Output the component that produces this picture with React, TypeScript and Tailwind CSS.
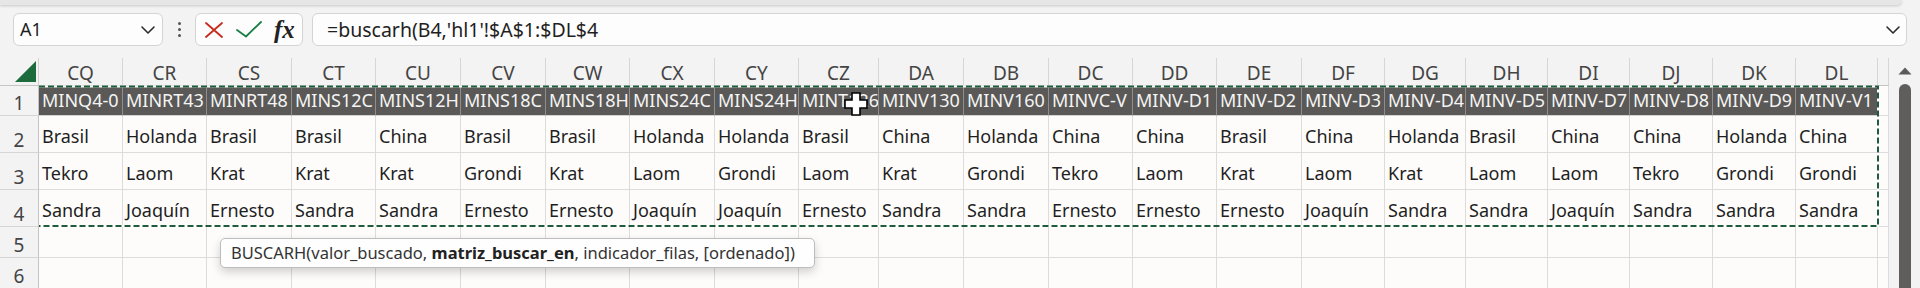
import React from "react";

const cols = ["CQ","CR","CS","CT","CU","CV","CW","CX","CY","CZ","DA","DB","DC","DD","DE","DF","DG","DH","DI","DJ","DK","DL"];
const r1 = ["MINQ4-0","MINRT43","MINRT48","MINS12C","MINS12H","MINS18C","MINS18H","MINS24C","MINS24H","MINT126","MINV130","MINV160","MINVC-V","MINV-D1","MINV-D2","MINV-D3","MINV-D4","MINV-D5","MINV-D7","MINV-D8","MINV-D9","MINV-V1"];
const r2 = ["Brasil","Holanda","Brasil","Brasil","China","Brasil","Brasil","Holanda","Holanda","Brasil","China","Holanda","China","China","Brasil","China","Holanda","Brasil","China","China","Holanda","China"];
const r3 = ["Tekro","Laom","Krat","Krat","Krat","Grondi","Krat","Laom","Grondi","Laom","Krat","Grondi","Tekro","Laom","Krat","Laom","Krat","Laom","Laom","Tekro","Grondi","Grondi"];
const r4 = ["Sandra","Joaquín","Ernesto","Sandra","Sandra","Ernesto","Ernesto","Joaquín","Joaquín","Ernesto","Sandra","Sandra","Ernesto","Ernesto","Ernesto","Joaquín","Sandra","Sandra","Joaquín","Sandra","Sandra","Sandra"];

function Chevron() {
  return (
    <svg width="24" height="24" viewBox="0 0 24 24" fill="none" stroke="#2b2b2b" strokeWidth="1.6" strokeLinecap="round" strokeLinejoin="round">
      <path d="m6 9 6 6 6-6" />
    </svg>
  );
}

function RowNum({ n }: { n: number }) {
  return (
    <div className="flex items-end justify-center border-r border-b border-r-[#c4c4c4] border-b-[#d6d6d6] bg-[#f3f3f3] pb-[1px] text-[19px] leading-[22px] text-[#444]">
      {n}
    </div>
  );
}

function DataCell({ text }: { text?: string }) {
  return (
    <div className="flex items-end overflow-hidden whitespace-nowrap border-r border-b border-[#dcdcdc] bg-[#fdfcfb] pl-[3px] pb-[5px] text-[18px] leading-[22px] text-[#1f1f1f]">
      {text}
    </div>
  );
}

export default function App() {
  return (
    <div className="flex h-[288px] w-[1920px] flex-col overflow-hidden bg-[#f3f3f3] font-['Noto_Sans',sans-serif]">
      <div className="h-[5px] w-[1902px] shrink-0 rounded-br-[6px] bg-[#e6e6e6] shadow-[0_1px_3px_rgba(0,0,0,0.18)]" />

      <div className="mt-[8px] flex h-[33px] shrink-0 pl-[13px]">
        <div className="flex w-[150px] items-center justify-between rounded-[6px] border border-[#d4d4d4] bg-[#fdfdfd] pl-[6px] pr-[2px]">
          <span className="text-[18px] text-[#1f1f1f]">A1</span>
          <Chevron />
        </div>
        <div className="flex w-[32px] flex-col items-center justify-center gap-[3px]">
          <div className="h-[3px] w-[3px] rounded-full bg-[#555]" />
          <div className="h-[3px] w-[3px] rounded-full bg-[#555]" />
          <div className="h-[3px] w-[3px] rounded-full bg-[#555]" />
        </div>
        <div className="flex w-[108px] items-center rounded-[6px] border border-[#d4d4d4] bg-[#fdfdfd] pl-[9px]">
          <svg width="18" height="16" viewBox="0 0 18 16" fill="none" stroke="#c42b1c" strokeWidth="1.8" strokeLinecap="round">
            <path d="M1 1 17 15M17 1 1 15" />
          </svg>
          <svg className="ml-[13px]" width="26" height="17" viewBox="0 0 26 17" fill="none" stroke="#1a7f45" strokeWidth="1.8" strokeLinecap="round" strokeLinejoin="round">
            <path d="M1 9 10 15.5 25 1" />
          </svg>
          <span className="ml-[12px] font-['Liberation_Serif',serif] text-[25px] font-bold italic leading-none text-[#222]">fx</span>
        </div>
        <div className="ml-[9px] flex w-[1595px] items-center justify-between rounded-[6px] border border-[#d4d4d4] bg-[#fdfdfd] pl-[14px] pr-[1px]">
          <span className="text-[19.5px] text-[#1f1f1f]">=buscarh(B4,'hl1'!$A$1:$DL$4</span>
          <Chevron />
        </div>
      </div>

      <div className="mt-[12px] flex h-[231px] shrink-0 overflow-hidden">
        <div className="relative grid w-[1889px] grid-cols-[39px_84px_84px_85px_84px_85px_85px_84px_85px_84px_80px_85px_85px_84px_84px_85px_83px_81px_82px_82px_83px_83px_82px_11px] grid-rows-[28px_30px_37px_37px_37px_31px_31px]">
          <div className="flex items-end justify-end border-r border-b border-r-[#d0d0d0] border-b-[#c4c4c4] pr-[2px] pb-[3px]">
            <svg width="21" height="21" viewBox="0 0 21 21">
              <path d="M21 0 21 21 0 21Z" fill="#1c6b3c" />
            </svg>
          </div>
          {cols.map((c) => (
            <div key={c} className="flex items-end justify-center border-r border-b border-r-[#d6d6d6] border-b-[#c4c4c4] pb-[1px] text-[19px] leading-[22px] text-[#444]">
              {c}
            </div>
          ))}
          <div className="border-r border-b border-r-[#d6d6d6] border-b-[#c4c4c4]" />

          <RowNum n={1} />
          {r1.map((t, i) => (
            <div key={i} className="flex items-end overflow-hidden whitespace-nowrap border-r border-b border-r-[#8f8e8c] border-b-[#d4d4d4] bg-[#5a5957] pl-[3px] pb-[4px] text-[18px] leading-[22px] text-[#f4f4f4]">
              {t}
            </div>
          ))}
          <DataCell />

          <RowNum n={2} />
          {r2.map((t, i) => <DataCell key={i} text={t} />)}
          <DataCell />

          <RowNum n={3} />
          {r3.map((t, i) => <DataCell key={i} text={t} />)}
          <DataCell />

          <RowNum n={4} />
          {r4.map((t, i) => <DataCell key={i} text={t} />)}
          <DataCell />

          <RowNum n={5} />
          {cols.map((c) => <DataCell key={c} />)}
          <DataCell />

          <RowNum n={6} />
          {cols.map((c) => <DataCell key={c} />)}
          <DataCell />

          <svg className="pointer-events-none absolute left-0 top-0" width="1889" height="175" viewBox="0 0 1889 175" fill="none">
            <polyline points="39,28.5 1878,28.5 1878,168 39,168" stroke="#ffffff" strokeWidth="2" />
            <polyline points="39,28.5 1878,28.5 1878,168 39,168" stroke="#1f5c3c" strokeWidth="2" strokeDasharray="6 3" />
          </svg>

          <svg className="pointer-events-none absolute left-[844px] top-[34px]" width="24" height="24" viewBox="0 0 24 24">
            <path d="M8 1h8v7h7v8h-7v7H8v-7H1V8h7z" fill="#ffffff" stroke="#000000" strokeWidth="1.6" strokeLinejoin="miter" />
          </svg>

          <div className="absolute left-[220px] top-[180px] flex h-[30px] w-[595px] items-center overflow-hidden rounded-[5px] border border-[#bdbdbd] bg-[#fefefe] pl-[10px] shadow-[0_4px_10px_rgba(0,0,0,0.18)]">
            <span className="whitespace-nowrap text-[16.5px] text-[#333]">
              BUSCARH(valor_buscado, <b className="font-bold text-[#222]">matriz_buscar_en</b>, indicador_filas, [ordenado])
            </span>
          </div>
        </div>

        <div className="flex w-[31px] flex-col items-center pt-[9px]">
          <svg width="14" height="8" viewBox="0 0 14 8" className="shrink-0">
            <path d="M7 0.5 13.5 7.5H0.5Z" fill="#5c5b59" />
          </svg>
          <div className="mt-[9px] w-[12px] flex-1 rounded-t-full bg-[#5f5e5c]" />
        </div>
      </div>
    </div>
  );
}
